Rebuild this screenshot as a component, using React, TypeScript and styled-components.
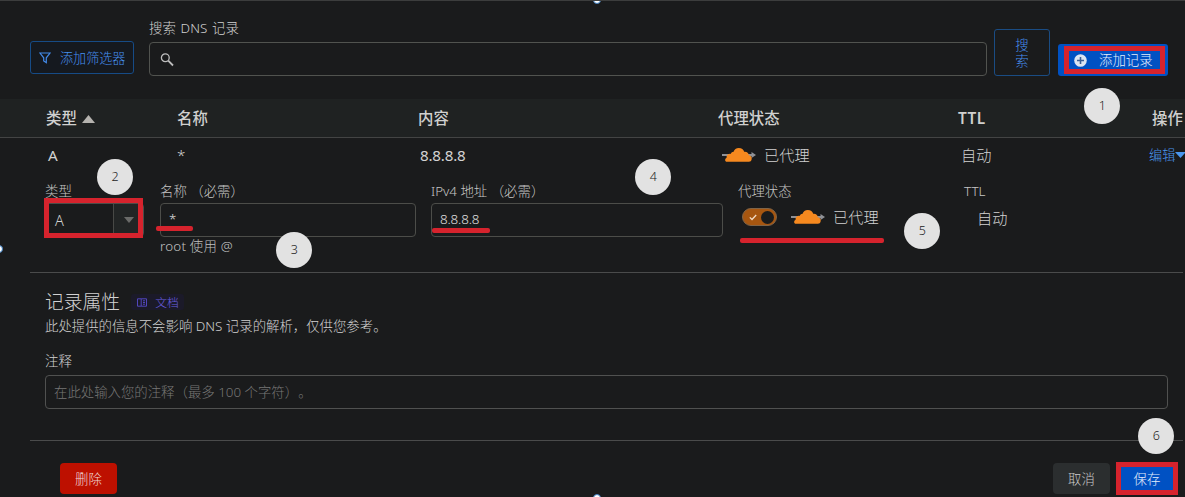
import React from "react";
import styled, { createGlobalStyle } from "styled-components";

const GlobalStyle = createGlobalStyle`
  * { box-sizing: border-box; }
  body {
    margin: 0;
    background: #1a1b1c;
    overflow: hidden;
  }
`;

const RED = "#d6232d";
const BLUE = "#0051c3";
const LINE = "#4a4b4b";

const Page = styled.main`
  position: relative;
  width: 1185px;
  height: 497px;
  overflow: hidden;
  background: #1a1b1c;
  border-top: 1px solid #3c3d3d;
  color: #d2d2d2;
  font-family: "Noto Sans", "Noto Sans CJK SC", sans-serif;
  font-size: 13.4px;
  font-weight: 300;
  line-height: 18px;
  white-space: nowrap;
  text-spacing-trim: space-all;
`;

const Toolbar = styled.div`
  display: flex;
  align-items: flex-end;
  height: 98px;
  padding: 0 17px 23px 30px;
`;

const FilterButton = styled.button`
  display: flex;
  align-items: center;
  gap: 9px;
  width: 104px;
  height: 33px;
  margin: 0 15px 2px 0;
  padding: 0 0 0 8px;
  border: 1px solid #164b86;
  border-radius: 3px;
  background: #15191f;
  color: #4690f0;
  font: inherit;
  font-size: 13.1px;
`;

const SearchField = styled.div`
  display: flex;
  flex-direction: column;
  gap: 4px;
  width: 838px;
  margin-right: 7px;
`;

const SearchLabel = styled.label`
  height: 18px;
  margin-top: -1px;
  margin-bottom: 1px;
  letter-spacing: 0.1px;
  word-spacing: 1px;
`;

const SearchBox = styled.div`
  display: flex;
  align-items: center;
  height: 34px;
  padding-left: 10px;
  border: 1px solid #51534f;
  border-radius: 4px;
`;

const SearchButton = styled.button`
  width: 56px;
  height: 47px;
  margin-right: 8px;
  padding: 0 18px;
  border: 1px solid #1a4c83;
  border-radius: 3px;
  background: transparent;
  color: #4690f0;
  font: inherit;
  line-height: 16px;
  white-space: normal;
`;

const AddButton = styled.button`
  display: flex;
  align-items: center;
  width: 110px;
  height: 32px;
  padding: 0 0 0 6px;
  border: 0;
  border-radius: 3px;
  background: ${BLUE};
`;

const AddOutline = styled.span`
  display: flex;
  align-items: center;
  gap: 12px;
  width: 101px;
  height: 28px;
  padding-left: 5px;
  border: 5px solid ${RED};
  color: #e4eefc;
  font: 300 13.4px/18px "Noto Sans", "Noto Sans CJK SC", sans-serif;
`;

const gridColumns = "131px 241px 300px 240px 194px auto";

const TableHead = styled.div`
  display: grid;
  grid-template-columns: ${gridColumns};
  align-items: center;
  height: 39px;
  padding: 1px 0 0 46px;
  border-bottom: 1px solid #434444;
  background: #1f2222;
  color: #d0d0cf;
  font-size: 15.4px;
  font-weight: 500;
`;

const LatinTitle = styled.span`
  font-weight: 600;
  letter-spacing: 0.5px;
`;

const SortLabel = styled.span`
  display: flex;
  align-items: center;
  gap: 5px;
`;

const TableRow = styled.div`
  display: grid;
  grid-template-columns: ${gridColumns};
  align-items: center;
  height: 36px;
  padding: 0 0 2px 46px;
  font-size: 15.2px;
`;

const Cell = styled.span<{ $indent: number }>`
  display: flex;
  align-items: center;
  padding-left: ${(p) => p.$indent}px;
`;

const LatinCell = styled(Cell)`
  font-weight: 400;
  letter-spacing: -0.2px;
`;

const EditLink = styled.a`
  display: flex;
  align-items: center;
  margin-left: -3px;
  color: #4a97ee;
  font-size: 13.2px;
`;

const ProxyStatus = styled.span`
  display: flex;
  align-items: center;
  gap: 8px;
  font-size: 15.2px;
`;

const Form = styled.section`
  display: flex;
  height: 98px;
  padding: 8px 0 0 45px;
`;

const Field = styled.div<{ $width: number; $gap: number }>`
  display: flex;
  flex-direction: column;
  width: ${(p) => p.$width}px;
  margin-right: ${(p) => p.$gap}px;
`;

const Label = styled.label`
  height: 21px;
  color: #c6c6c5;
`;

const TextBox = styled.div`
  display: flex;
  align-items: center;
  height: 34px;
  padding-left: 8px;
  border: 1px solid #4c4d49;
  border-radius: 4px;
  font-size: 13.4px;
  letter-spacing: -0.15px;
`;

const FieldBox = styled(TextBox)`
  padding-bottom: 2px;
  color: #e0e0e0;
`;

const SelectBox = styled(TextBox)`
  justify-content: space-between;
  padding-left: 9px;
  overflow: hidden;
  font-size: 14.5px;
`;

const SelectArrow = styled.span`
  display: flex;
  align-items: center;
  width: 30px;
  height: 100%;
  padding-left: 10px;
  border-left: 1px solid #484946;
  background: #222525;
`;

const Hint = styled.span`
  color: #c0c0c0;
  letter-spacing: 0.2px;
`;

const ToggleLine = styled.div`
  display: flex;
  align-items: center;
  gap: 14px;
  height: 28px;
  padding-left: 4px;
`;

const Toggle = styled.span`
  display: flex;
  align-items: center;
  justify-content: space-between;
  width: 35px;
  height: 18px;
  padding: 0 2px 0 6px;
  border: 1px solid #806447;
  border-radius: 9px;
  background: #a65610;
`;

const Knob = styled.span`
  width: 13px;
  height: 13px;
  border-radius: 50%;
  background: #1a1b1c;
`;

const AutoValue = styled.span`
  padding: 6px 0 0 13px;
  font-size: 15.2px;
`;

const Attributes = styled.section`
  display: flex;
  flex-direction: column;
  height: 169px;
  margin: 0 2px 0 30px;
  padding: 16px 15px 0;
  border: solid ${LINE};
  border-width: 1px 0;
`;

const Heading = styled.h2`
  display: flex;
  align-items: center;
  gap: 11px;
  height: 26px;
  margin: 0;
  font-size: 18.8px;
  font-weight: 300;
`;

const DocBadge = styled.span`
  display: flex;
  align-items: center;
  gap: 8px;
  height: 16px;
  padding: 0 5px 0 6px;
  border-radius: 3px;
  background: #1b1a29;
  color: #6a5ee0;
  font-size: 11.8px;
`;

const Description = styled.p`
  margin: 2px 0 17px;
`;

const CommentBox = styled(TextBox)`
  width: 1123px;
  height: 34px;
  margin-top: 5px;
  border-color: #505150;
  color: #777776;
  letter-spacing: 0;
`;

const Footer = styled.footer`
  display: flex;
  align-items: center;
  height: 33px;
  margin-top: 21px;
  padding: 0 7px 0 60px;
`;

const DeleteButton = styled.button`
  width: 57px;
  height: 31px;
  margin-right: auto;
  border: 0;
  border-radius: 4px;
  background: #bd1000;
  color: #f1d7d3;
  font: inherit;
`;

const CancelButton = styled(DeleteButton)`
  margin-right: 6px;
  background: #2b2e2f;
  color: #c8c8c8;
`;

const SaveButton = styled.button`
  width: 62px;
  height: 33px;
  padding: 0;
  border: 5px solid ${RED};
  background: ${BLUE};
  color: #e4eefc;
  font: inherit;
`;

const Step = styled.span<{ $x: number; $y: number }>`
  position: absolute;
  left: ${(p) => p.$x - 18}px;
  top: ${(p) => p.$y - 19}px;
  display: flex;
  align-items: center;
  justify-content: center;
  width: 36px;
  height: 36px;
  border-radius: 50%;
  background: #e2e2e2;
  color: #222;
  font-size: 12.5px;
`;

const RedFrame = styled.span`
  position: absolute;
  left: 44px;
  top: 197px;
  width: 99px;
  height: 40px;
  border: 5px solid ${RED};
`;

const Underline = styled.span<{ $x: number; $y: number; $w: number }>`
  position: absolute;
  left: ${(p) => p.$x}px;
  top: ${(p) => p.$y}px;
  width: ${(p) => p.$w}px;
  height: 5px;
  border-radius: 2px;
  background: ${RED};
`;

const Handle = styled.span<{ $x: number; $y: number }>`
  position: absolute;
  left: ${(p) => p.$x - 4}px;
  top: ${(p) => p.$y - 4}px;
  width: 8px;
  height: 8px;
  border: 1px solid #3a7cc0;
  border-radius: 50%;
  background: #fff;
`;

const Cloud = () => (
  <svg width="34" height="16" viewBox="0 0 34 16">
    <path d="M0 8H31" stroke="#8f9196" strokeWidth="2" />
    <path d="M29.5 5L34 8L29.5 11Z" fill="#8f9196" />
    <path
      d="M5 14.8C2.6 14.8 2.6 11.5 4.6 10.7C4.2 8.2 6.2 6.6 8.8 6.9C9.2 5.4 10.3 4.9 11.6 4.7C12.2 2.4 14.2 1 16.8 1C19.6 1 21.6 2.4 22.2 4.8C24.8 4.4 26.6 6 26.8 8.2C29.2 8.6 30.2 10.4 29.6 12.6C29.2 14 28.4 14.8 27 14.8Z"
      fill="#f6891f"
    />
  </svg>
);

const Triangle = ({ w, h, color, up }: { w: number; h: number; color: string; up?: boolean }) => (
  <svg width={w} height={h} viewBox="0 0 10 10" preserveAspectRatio="none">
    <path d={up ? "M0 10L5 0L10 10Z" : "M0 0H10L5 10Z"} fill={color} />
  </svg>
);

const steps = [
  { n: 1, x: 1102.4, y: 106.4 },
  { n: 2, x: 115, y: 177 },
  { n: 3, x: 294.4, y: 250 },
  { n: 4, x: 653.4, y: 177 },
  { n: 5, x: 922.4, y: 231.4 },
  { n: 6, x: 1156.4, y: 436.4 },
];

export default function App() {
  return (
    <>
      <GlobalStyle />
      <Page>
        <Toolbar>
          <FilterButton>
            <svg width="12" height="12" viewBox="0 0 12 12" fill="none" stroke="#438bea" strokeWidth="1.2">
              <path d="M.9 1H11.1L7.3 5.8V10.6L4.7 9V5.8Z" />
            </svg>
            添加筛选器
          </FilterButton>
          <SearchField>
            <SearchLabel>搜索 DNS 记录</SearchLabel>
            <SearchBox>
              <svg width="15" height="15" viewBox="0 0 15 15" fill="none" stroke="#bdbdbd">
                <circle cx="5.3" cy="5.8" r="3.9" strokeWidth="1.3" />
                <path d="M8.2 8.7L13 13.5" strokeWidth="1.8" />
              </svg>
            </SearchBox>
          </SearchField>
          <SearchButton>搜索</SearchButton>
          <AddButton>
            <AddOutline>
              <svg width="13" height="13" viewBox="0 0 13 13">
                <circle cx="6.5" cy="6.5" r="6.3" fill="#dce5f2" />
                <path d="M6.5 3V10M3 6.5H10" stroke="#3c5f96" strokeWidth="1.6" />
              </svg>
              添加记录
            </AddOutline>
          </AddButton>
        </Toolbar>

        <TableHead>
          <SortLabel>
            类型
            <Triangle w={13} h={8} color="#b5b3af" up />
          </SortLabel>
          <span>名称</span>
          <span>内容</span>
          <span>代理状态</span>
          <LatinTitle>TTL</LatinTitle>
          <span>操作</span>
        </TableHead>

        <TableRow>
          <LatinCell $indent={2}>A</LatinCell>
          <Cell $indent={0}>*</Cell>
          <LatinCell $indent={2}>8.8.8.8</LatinCell>
          <Cell $indent={4}>
            <ProxyStatus>
              <Cloud />
              已代理
            </ProxyStatus>
          </Cell>
          <Cell $indent={3}>自动</Cell>
          <EditLink>
            编辑
            <Triangle w={11} h={6} color="#4a97ee" />
          </EditLink>
        </TableRow>

        <Form>
          <Field $width={99} $gap={16}>
            <Label>类型</Label>
            <SelectBox>
              A
              <SelectArrow>
                <Triangle w={10} h={6} color="#6a6b69" />
              </SelectArrow>
            </SelectBox>
          </Field>
          <Field $width={256} $gap={15}>
            <Label>名称 （必需）</Label>
            <FieldBox>*</FieldBox>
            <Hint>root 使用 @</Hint>
          </Field>
          <Field $width={292} $gap={15}>
            <Label>IPv4 地址 （必需）</Label>
            <FieldBox>8.8.8.8</FieldBox>
          </Field>
          <Field $width={200} $gap={26}>
            <Label>代理状态</Label>
            <ToggleLine>
              <Toggle>
                <svg width="8" height="7" viewBox="0 0 8 7" fill="none" stroke="#f3dcc5" strokeWidth="1.3">
                  <path d="M.8 3.4L3 5.5L7.2 1" />
                </svg>
                <Knob />
              </Toggle>
              <ProxyStatus>
                <Cloud />
                已代理
              </ProxyStatus>
            </ToggleLine>
          </Field>
          <Field $width={100} $gap={0}>
            <Label>TTL</Label>
            <AutoValue>自动</AutoValue>
          </Field>
        </Form>

        <Attributes>
          <Heading>
            记录属性
            <DocBadge>
              <svg width="10" height="9" viewBox="0 0 10 9" fill="none" stroke="#5146bd">
                <path d="M.5 .8H4.2V8.2H.5ZM4.2 .8H9.5V8.2H4.2M6 2.8H8M6 4.5H8M6 6.2H8" />
              </svg>
              文档
            </DocBadge>
          </Heading>
          <Description>此处提供的信息不会影响 DNS 记录的解析，仅供您参考。</Description>
          <span>注释</span>
          <CommentBox>在此处输入您的注释（最多 100 个字符）。</CommentBox>
        </Attributes>

        <Footer>
          <DeleteButton>删除</DeleteButton>
          <CancelButton>取消</CancelButton>
          <SaveButton>保存</SaveButton>
        </Footer>

        <RedFrame />
        <Underline $x={156} $y={225} $w={37} />
        <Underline $x={432} $y={227} $w={58} />
        <Underline $x={740} $y={237} $w={144} />
        {steps.map((s) => (
          <Step key={s.n} $x={s.x} $y={s.y}>
            {s.n}
          </Step>
        ))}
        <Handle $x={597} $y={-1} />
        <Handle $x={-1} $y={248} />
        <Handle $x={597} $y={497} />
      </Page>
    </>
  );
}
